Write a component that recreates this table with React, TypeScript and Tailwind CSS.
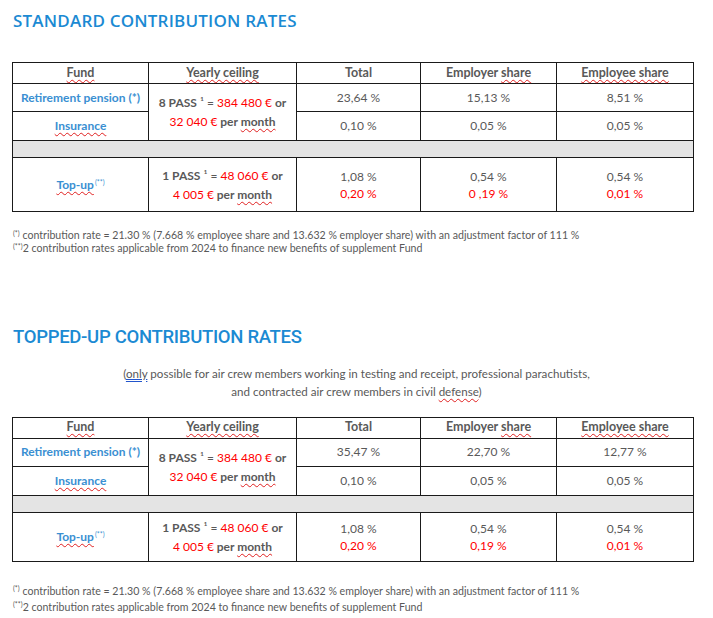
import React from 'react';

const wavy =
  'underline decoration-wavy decoration-[#e02020] decoration-1 underline-offset-[2px] [text-decoration-skip-ink:none]';

type Row = { total: string; employer: string; employee: string };
type TableData = {
  retirement: Row;
  insurance: Row;
  topup: { total: [string, string]; employer: [string, string]; employee: [string, string] };
  topupHeight: string;
};

function Ceiling({ pass, amount, monthly }: { pass: string; amount: string; monthly: string }) {
  return (
    <div className="leading-[19px] font-bold text-[#595959]">
      <div>
        {pass}
        <span className="font-normal"> ¹ = </span>
        <span className="font-normal text-[#ff0000]">{amount}</span> or
      </div>
      <div>
        <span className="font-normal text-[#ff0000]">{monthly}</span> per <span className={wavy}>month</span>
      </div>
    </div>
  );
}

function RateTable({ data }: { data: TableData }) {
  const cell = 'border border-[#1a1a1a] text-center align-middle';
  return (
    <table className="mx-[12px] w-[681px] border-collapse table-fixed text-[12px] text-[#595959] font-['Lato',sans-serif]">
      <colgroup>
        <col className="w-[136px]" />
        <col className="w-[148px]" />
        <col className="w-[124px]" />
        <col className="w-[136px]" />
        <col className="w-[137px]" />
      </colgroup>
      <thead>
        <tr className="h-[21px] font-bold text-[12.5px]">
          <th className={cell}><span className={wavy}>Fund</span></th>
          <th className={cell}><span className={wavy}>Yearly ceiling</span></th>
          <th className={cell}>Total</th>
          <th className={cell}>Employer <span className={wavy}>share</span></th>
          <th className={cell}><span className={wavy}>Employee share</span></th>
        </tr>
      </thead>
      <tbody>
        <tr className="h-[28px]">
          <td className={`${cell} font-bold text-[#3a8fd2]`}>Retirement pension (*)</td>
          <td className={cell} rowSpan={2}>
            <Ceiling pass="8 PASS" amount="384 480 €" monthly="32 040 €" />
          </td>
          <td className={cell}>{data.retirement.total}</td>
          <td className={cell}>{data.retirement.employer}</td>
          <td className={cell}>{data.retirement.employee}</td>
        </tr>
        <tr className="h-[29px]">
          <td className={`${cell} font-bold text-[#3a8fd2]`}><span className={wavy}>Insurance</span></td>
          <td className={cell}>{data.insurance.total}</td>
          <td className={cell}>{data.insurance.employer}</td>
          <td className={cell}>{data.insurance.employee}</td>
        </tr>
        <tr className="h-[17px] bg-[#e4e4e4]">
          <td className={cell} colSpan={5}></td>
        </tr>
        <tr className={data.topupHeight}>
          <td className={`${cell} font-bold text-[#3a8fd2]`}>
            <span className={wavy}>Top-up</span>
            <sup className="text-[7px] font-normal ml-[1px]">(**)</sup>
          </td>
          <td className={cell}>
            <Ceiling pass="1 PASS" amount="48 060 €" monthly="4 005 €" />
          </td>
          {[data.topup.total, data.topup.employer, data.topup.employee].map((v, i) => (
            <td key={i} className={cell}>
              <div className="leading-[17px]">{v[0]}</div>
              <div className="leading-[17px] text-[#ff0000]">{v[1]}</div>
            </td>
          ))}
        </tr>
      </tbody>
    </table>
  );
}

function Footnotes({ gap }: { gap: string }) {
  return (
    <div className={`pl-[13px] text-[10.6px] ${gap} text-[#595959] font-['Lato',sans-serif]`}>
      <div>
        <sup className="text-[7px]">(*)</sup> contribution rate = 21.30 % (7.668 % employee share and 13.632 % employer share) with an adjustment factor of 111 %
      </div>
      <div>
        <sup className="text-[7px]">(**)</sup>2 contribution rates applicable from 2024 to finance new benefits of supplement Fund
      </div>
    </div>
  );
}

export default function App() {
  const standard: TableData = {
    retirement: { total: '23,64 %', employer: '15,13 %', employee: '8,51 %' },
    insurance: { total: '0,10 %', employer: '0,05 %', employee: '0,05 %' },
    topup: { total: ['1,08 %', '0,20 %'], employer: ['0,54 %', '0 ,19 %'], employee: ['0,54 %', '0,01 %'] },
    topupHeight: 'h-[54px]',
  };
  const topped: TableData = {
    retirement: { total: '35,47 %', employer: '22,70 %', employee: '12,77 %' },
    insurance: { total: '0,10 %', employer: '0,05 %', employee: '0,05 %' },
    topup: { total: ['1,08 %', '0,20 %'], employer: ['0,54 %', '0,19 %'], employee: ['0,54 %', '0,01 %'] },
    topupHeight: 'h-[49px]',
  };

  return (
    <div className="w-[713px] h-[618px] bg-white overflow-hidden">
      <h1 className="pl-[13px] pt-[8px] h-[62px] text-[17px] font-semibold tracking-[0.2px] text-[#1b8ad3] font-['Open_Sans',sans-serif]">
        STANDARD CONTRIBUTION RATES
      </h1>
      <RateTable data={standard} />
      <div className="pt-[17px]">
        <Footnotes gap="leading-[13px]" />
      </div>

      <h2 className="pl-[13px] pt-[69px] text-[18.5px] font-medium text-[#1b8ad3] font-['Roboto',sans-serif] tracking-[-0.3px]">
        TOPPED-UP CONTRIBUTION RATES
      </h2>
      <div className="pt-[13px] h-[65px] text-center text-[11.6px] leading-[18px] text-[#595959] font-['Lato',sans-serif]">
        <div>
          (<span className="underline decoration-double decoration-[#2255cc]">only</span> possible for air crew members working in testing and receipt, professional parachutists,
        </div>
        <div>
          and contracted air crew members in civil <span className={wavy}>defense</span>)
        </div>
      </div>
      <RateTable data={topped} />
      <div className="pt-[21px]">
        <Footnotes gap="leading-[16px]" />
      </div>
    </div>
  );
}
